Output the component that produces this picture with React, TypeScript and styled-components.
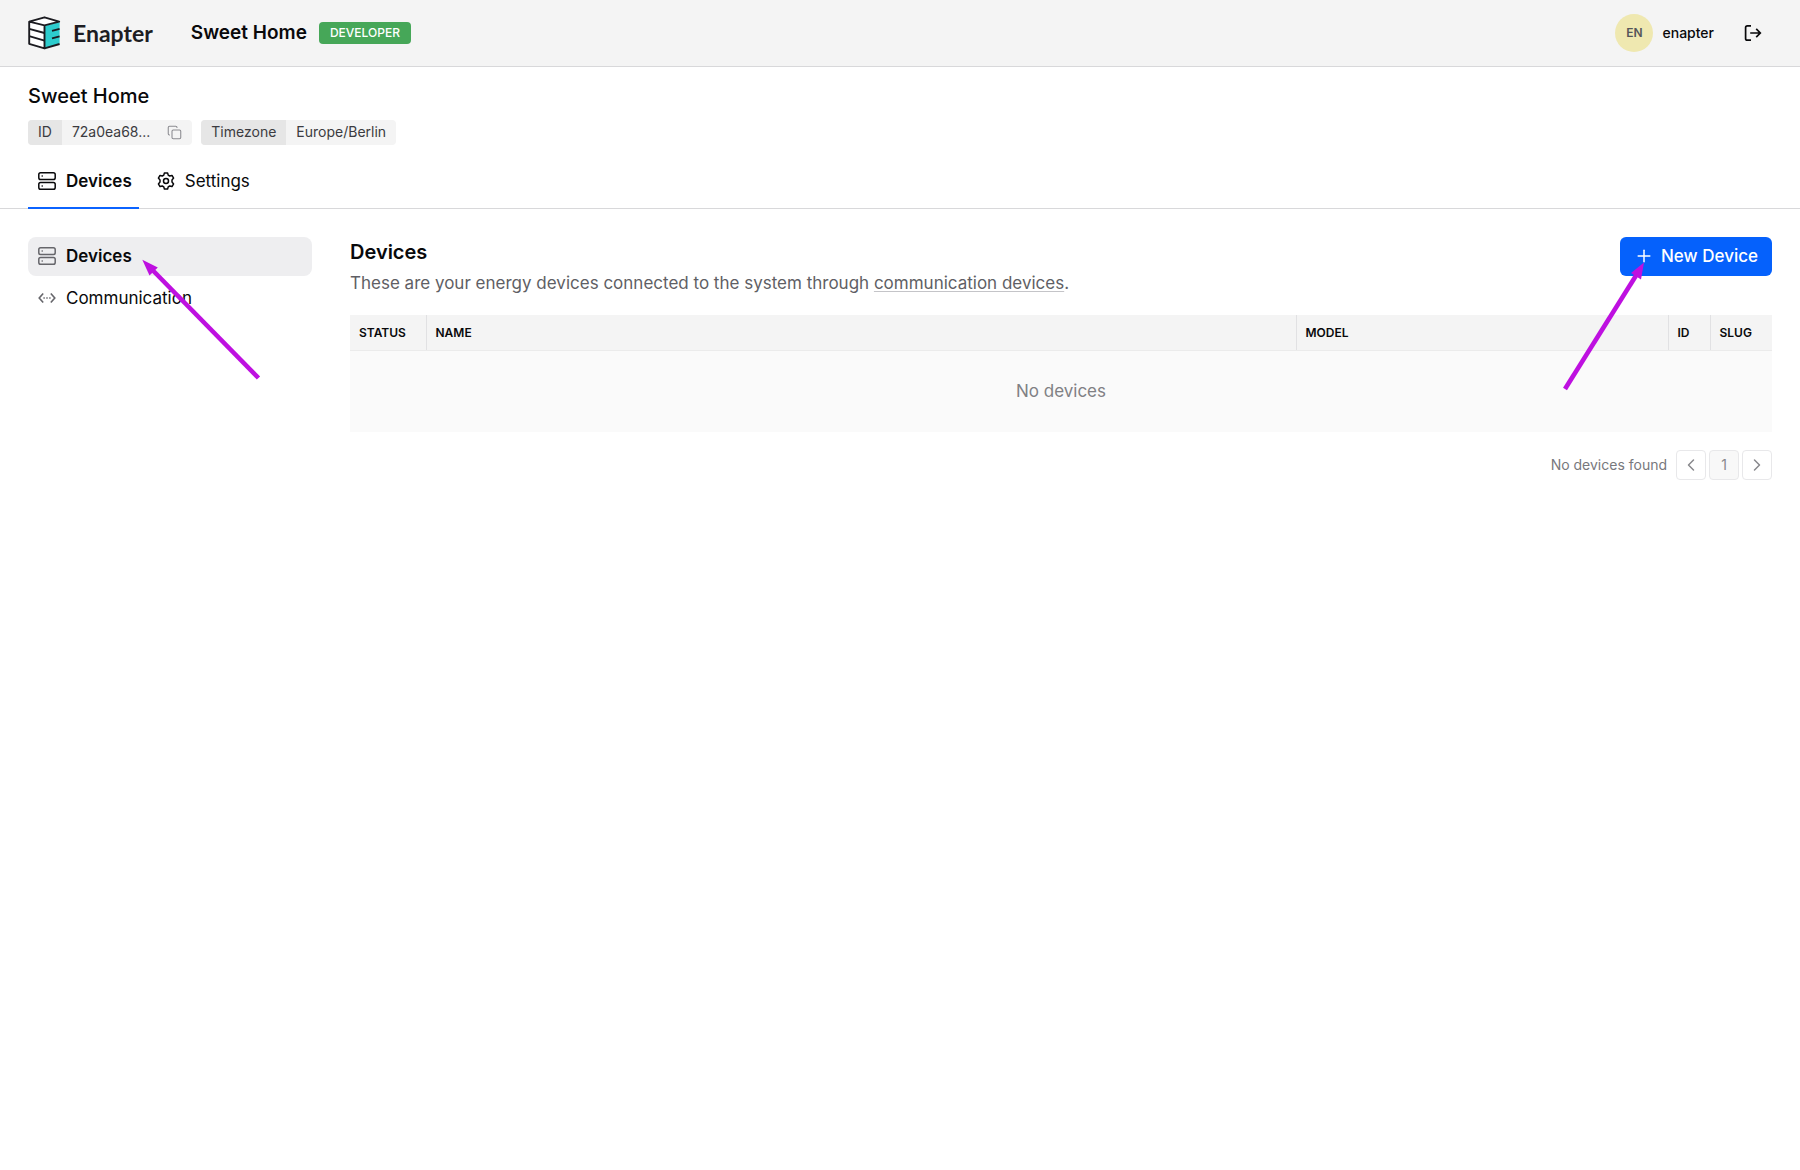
import React from "react";
import styled, { createGlobalStyle } from "styled-components";
import { ChevronLeft, ChevronRight, Copy, Plus } from "lucide-react";

const GlobalStyle = createGlobalStyle`
  *, *::before, *::after { box-sizing: border-box; }
  body {
    margin: 0;
    background: #ffffff;
    color: #09090b;
    font-family: Inter, "Liberation Sans", sans-serif;
    font-size: 16px;
    line-height: 24px;
  }
  h1, h2, p, ul, dl, dt, dd { margin: 0; padding: 0; }
  ul { list-style: none; }
  button { font: inherit; color: inherit; cursor: pointer; }
  a { color: inherit; text-decoration: none; }
  svg { display: block; flex: none; }
`;

const Header = styled.header`
  display: flex;
  align-items: center;
  justify-content: space-between;
  height: 67px;
  padding: 0 28px;
  background: #f4f4f4;
  border-bottom: 1px solid #d8d8da;
`;

const HeaderGroup = styled.div<{ $gap: number }>`
  display: flex;
  align-items: center;
  gap: ${(p) => p.$gap}px;
`;

const Brand = styled.a`
  display: flex;
  align-items: center;
  gap: 12px;
  margin-right: 26px;
  color: #1d1d22;
  font-family: Lato, "Open Sans", sans-serif;
  font-size: 23px;
  font-weight: 700;
`;

const SiteName = styled.span`
  font-size: 19px;
  font-weight: 600;
`;

const RoleBadge = styled.span`
  padding: 0 11px;
  border-radius: 4px;
  background: #46a758;
  color: #ffffff;
  font-size: 12px;
  font-weight: 500;
  line-height: 22px;
`;

const Avatar = styled.span`
  display: grid;
  place-items: center;
  width: 38px;
  height: 38px;
  border-radius: 50%;
  background: #efe8b0;
  color: #55555a;
  font-size: 12px;
  font-weight: 600;
`;

const UserName = styled.span`
  font-size: 14px;
  font-weight: 500;
`;

const IconButton = styled.button`
  display: grid;
  place-items: center;
  width: 38px;
  height: 38px;
  padding: 0;
  border: 0;
  background: transparent;
`;

const SiteBar = styled.section`
  padding: 15px 28px 0;
  border-bottom: 1px solid #d8d8da;
`;

const SiteTitle = styled.h1`
  font-size: 20px;
  font-weight: 500;
  line-height: 28px;
`;

const TagList = styled.dl`
  display: flex;
  gap: 9px;
  margin-top: 10px;
`;

const Tag = styled.div`
  display: flex;
  overflow: hidden;
  border-radius: 4px;
  background: #f4f4f4;
  color: #3b3b40;
  font-size: 14px;
  line-height: 24px;
`;

const TagLabel = styled.dt`
  padding: 0 10px 1px;
  background: #e6e6e6;
`;

const TagValue = styled.dd`
  display: flex;
  align-items: center;
  gap: 17px;
  padding: 0 10px 1px;
`;

const CopyButton = styled.button`
  display: grid;
  padding: 0;
  border: 0;
  background: none;
  color: #8b8b90;
`;

const Tabs = styled.nav`
  display: flex;
  gap: 8px;
  margin-top: 9px;
`;

const Tab = styled.a<{ $active?: boolean }>`
  display: flex;
  align-items: center;
  gap: 10px;
  height: 55px;
  margin-bottom: -1px;
  padding: 1px 7px 0 10px;
  border-bottom: 2px solid ${(p) => (p.$active ? "#0b63ff" : "transparent")};
  font-size: 17px;
  font-weight: ${(p) => (p.$active ? 600 : 400)};
`;

const Body = styled.div`
  display: flex;
  align-items: flex-start;
  gap: 38px;
  padding: 28px;
`;

const SideNav = styled.nav`
  flex: none;
  width: 284px;
`;

const SideItem = styled.li`
  position: relative;
  margin-bottom: 3px;
`;

const SideLink = styled.a<{ $active?: boolean }>`
  display: flex;
  align-items: center;
  gap: 10px;
  height: 39px;
  padding: 0 10px 1px;
  border-radius: 8px;
  background: ${(p) => (p.$active ? "#eeeef0" : "transparent")};
  font-size: 17px;
  font-weight: ${(p) => (p.$active ? 600 : 400)};

  svg { color: #66666b; }
`;

const Main = styled.main`
  flex: 1;
  min-width: 0;
`;

const SectionHead = styled.div`
  display: flex;
  align-items: flex-start;
  justify-content: space-between;
  margin-bottom: 20px;
`;

const SectionTitle = styled.h2`
  font-size: 20px;
  font-weight: 600;
  line-height: 30px;
`;

const Description = styled.p`
  margin-top: 4px;
  color: #5f5f65;
  font-size: 17px;
`;

const InlineLink = styled.a`
  text-decoration: underline;
  text-decoration-color: #c4c4c8;
  text-decoration-thickness: 1px;
  text-underline-offset: 2px;
`;

const ActionWrap = styled.div`
  position: relative;
`;

const PrimaryButton = styled.button`
  display: flex;
  align-items: center;
  gap: 7px;
  height: 39px;
  padding: 0 14px 1px;
  border: 0;
  border-radius: 6px;
  background: #0561fc;
  color: #ffffff;
  font-size: 17px;
  font-weight: 500;
`;

const Pointer = styled.svg<{ $side: "left" | "right" }>`
  position: absolute;
  z-index: 1;
  top: 20px;
  ${(p) => (p.$side === "left" ? "left: 112px;" : "right: 124px;")}
  color: #be10e0;
  pointer-events: none;
`;

const Table = styled.table`
  width: 100%;
  border-collapse: collapse;
  table-layout: fixed;
`;

const HeadCell = styled.th<{ $width?: string }>`
  width: ${(p) => p.$width ?? "auto"};
  height: 35px;
  padding: 1px 9px 0;
  border-bottom: 1px solid #ebebeb;
  background: #f4f4f4;
  font-size: 12px;
  font-weight: 600;
  text-align: left;
  text-transform: uppercase;

  & + & { border-left: 1px solid #e1e1e3; }
`;

const EmptyCell = styled.td`
  height: 82px;
  padding: 0;
  background: #fafafa;
  color: #808084;
  font-size: 17px;
  text-align: center;
`;

const Pager = styled.nav`
  display: flex;
  align-items: center;
  justify-content: flex-end;
  gap: 3px;
  margin-top: 18px;
`;

const PagerText = styled.span`
  margin-right: 6px;
  color: #78787d;
  font-size: 14px;
`;

const PagerButton = styled.button<{ $current?: boolean }>`
  display: grid;
  place-items: center;
  width: 30px;
  height: 30px;
  padding: 0;
  border: 1px solid #e8e8ea;
  border-radius: 4px;
  background: ${(p) => (p.$current ? "#f8f8f8" : "#ffffff")};
  color: #88888c;
  font-size: 14px;
`;

function Logo() {
  return (
    <svg width="33" height="34" viewBox="0 0 33 34" fill="none" aria-hidden="true">
      <path d="M1.5 6 16.5 1.5 31.5 6 16.5 10Z" fill="#fff" />
      <path d="M1.5 6 16.5 10V32.5L1.5 27.5Z" fill="#fff" />
      <path d="M16.5 10 31.6 6V27.5L16.5 32.5Z" fill="#2dcccd" />
      <g stroke="#1b1b20" strokeWidth="1.9" strokeLinejoin="round">
        <path d="M1.2 5.7 16.5 1.3 31.2 5.6 16.5 9.4 1.2 5.7V27.8L16.5 32.4V9.4" />
        <path d="M1.2 12.8 16.5 17M1.2 20.2 16.5 24.6M16.5 32.4 31.6 28" />
        <path d="M24 14.8 31.6 12.8M24 22.4 31.6 20.4" />
      </g>
    </svg>
  );
}

function ServerIcon() {
  return (
    <svg width="18" height="18" viewBox="0 0 18 18" fill="none" stroke="currentColor" strokeWidth="1.5" aria-hidden="true">
      <rect x="0.8" y="0.8" width="16.4" height="6.7" rx="1.8" />
      <rect x="0.8" y="10.5" width="16.4" height="6.7" rx="1.8" />
      <path d="M3.6 4.1H4.8M3.6 13.9H4.8" />
    </svg>
  );
}

function GearIcon() {
  return (
    <svg width="18" height="18" viewBox="0 0 18 18" fill="none" stroke="currentColor" strokeWidth="1.5" strokeLinejoin="round" aria-hidden="true">
      <path d="M7.4 0.9H10.6L11.2 3.1 12.7 4 15 3.4 16.6 6.1 15 7.9V10.1L16.6 11.9 15 14.6 12.7 14 11.2 14.9 10.6 17.1H7.4L6.8 14.9 5.3 14 3 14.6 1.4 11.9 3 10.1V7.9L1.4 6.1 3 3.4 5.3 4 6.8 3.1Z" />
      <circle cx="9" cy="9" r="2.5" />
    </svg>
  );
}

function CommunicationIcon() {
  return (
    <svg width="18" height="18" viewBox="0 0 18 18" fill="none" stroke="currentColor" strokeWidth="1.6" aria-hidden="true">
      <path d="M5.2 4.4 1.2 9 5.2 13.6M12.8 4.4 16.8 9 12.8 13.6" />
      <path d="M5.4 9H6.8M8.3 9H9.7M11.2 9H12.6" />
    </svg>
  );
}

function SignOutIcon() {
  return (
    <svg width="18" height="18" viewBox="0 0 18 18" fill="none" stroke="currentColor" strokeWidth="1.7" aria-hidden="true">
      <path d="M7 1.8H3.4Q1.6 1.8 1.6 3.6V14.4Q1.6 16.2 3.4 16.2H7" />
      <path d="M6.2 9H16.2M12.2 4.9 16.3 9 12.2 13.1" />
    </svg>
  );
}

export default function App() {
  return (
    <>
      <GlobalStyle />
      <Header>
        <HeaderGroup $gap={12}>
          <Brand href="#">
            <Logo />
            Enapter
          </Brand>
          <SiteName>Sweet Home</SiteName>
          <RoleBadge>DEVELOPER</RoleBadge>
        </HeaderGroup>
        <HeaderGroup $gap={20}>
          <HeaderGroup $gap={9}>
            <Avatar>EN</Avatar>
            <UserName>enapter</UserName>
          </HeaderGroup>
          <IconButton aria-label="Sign out">
            <SignOutIcon />
          </IconButton>
        </HeaderGroup>
      </Header>

      <SiteBar>
        <SiteTitle>Sweet Home</SiteTitle>
        <TagList>
          <Tag>
            <TagLabel>ID</TagLabel>
            <TagValue>
              72a0ea68...
              <CopyButton aria-label="Copy ID">
                <Copy size={15} strokeWidth={1.7} />
              </CopyButton>
            </TagValue>
          </Tag>
          <Tag>
            <TagLabel>Timezone</TagLabel>
            <TagValue>Europe/Berlin</TagValue>
          </Tag>
        </TagList>
        <Tabs aria-label="Site">
          <Tab href="#devices" $active>
            <ServerIcon />
            Devices
          </Tab>
          <Tab href="#settings">
            <GearIcon />
            Settings
          </Tab>
        </Tabs>
      </SiteBar>

      <Body>
        <SideNav aria-label="Devices">
          <ul>
            <SideItem>
              <SideLink href="#devices" $active>
                <ServerIcon />
                Devices
              </SideLink>
              <Pointer $side="left" width="124" height="126" viewBox="140 257 124 126" fill="currentColor" aria-hidden="true">
                <path d="M142.3 259.7 157.8 267.5 149.5 275.6Z" />
                <path d="M151 268.5 258.5 378" stroke="currentColor" strokeWidth="4.6" />
              </Pointer>
            </SideItem>
            <SideItem>
              <SideLink href="#communication">
                <CommunicationIcon />
                Communication
              </SideLink>
            </SideItem>
          </ul>
        </SideNav>

        <Main>
          <SectionHead>
            <div>
              <SectionTitle>Devices</SectionTitle>
              <Description>
                These are your energy devices connected to the system through{" "}
                <InlineLink href="#communication">communication devices</InlineLink>.
              </Description>
            </div>
            <ActionWrap>
              <PrimaryButton>
                <Plus size={20} strokeWidth={1.8} />
                New Device
              </PrimaryButton>
              <Pointer $side="right" width="88" height="136" viewBox="1560 257 88 136" fill="currentColor" aria-hidden="true">
                <path d="M1644 262.5 1641 279.5 1631 273Z" />
                <path d="M1637 274 1565 389" stroke="currentColor" strokeWidth="4.6" />
              </Pointer>
            </ActionWrap>
          </SectionHead>

          <Table>
            <thead>
              <tr>
                <HeadCell $width="76px">Status</HeadCell>
                <HeadCell $width="auto">Name</HeadCell>
                <HeadCell $width="372px">Model</HeadCell>
                <HeadCell $width="42px">ID</HeadCell>
                <HeadCell $width="62px">Slug</HeadCell>
              </tr>
            </thead>
            <tbody>
              <tr>
                <EmptyCell colSpan={5}>No devices</EmptyCell>
              </tr>
            </tbody>
          </Table>

          <Pager aria-label="Pages">
            <PagerText>No devices found</PagerText>
            <PagerButton aria-label="Previous page">
              <ChevronLeft size={20} strokeWidth={1.8} />
            </PagerButton>
            <PagerButton $current>1</PagerButton>
            <PagerButton aria-label="Next page">
              <ChevronRight size={20} strokeWidth={1.8} />
            </PagerButton>
          </Pager>
        </Main>
      </Body>
    </>
  );
}
